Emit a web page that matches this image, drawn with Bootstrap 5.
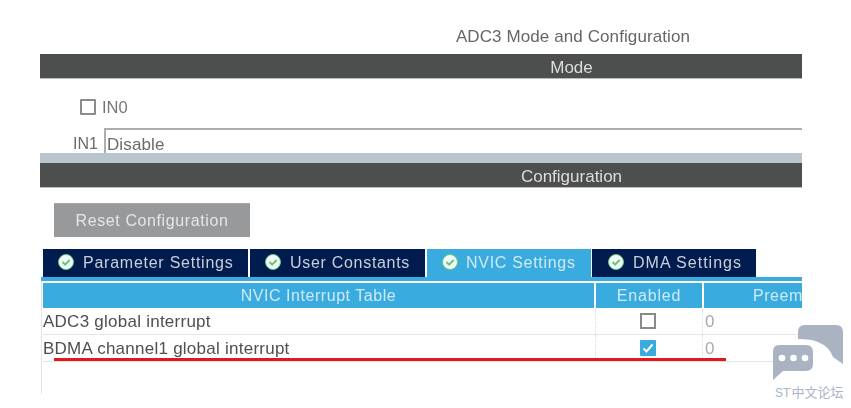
<!DOCTYPE html>
<html lang="en">
<head>
<meta charset="utf-8">
<title>ADC3 Mode and Configuration</title>
<link href="https://cdn.jsdelivr.net/npm/bootstrap@5.3.0/dist/css/bootstrap.min.css" rel="stylesheet">
<style>
html,body{margin:0;height:408px;overflow:hidden;background:#fff}
body{font-family:"Liberation Sans",Arial,sans-serif;color:#5a5a5a;font-size:16px;line-height:1.2}
.shot{width:762px;height:394px;margin-left:40px;overflow:hidden;filter:blur(.45px)}
.ttl{height:54px;padding-top:27px;padding-left:304px;text-align:center;letter-spacing:.1px;font-size:17px;line-height:20px;color:#666}
.sect{height:25px;background:#4d4f4f;color:#ddd;border-bottom:1px solid #bbb;text-align:center;padding-left:301px;font-size:17px;line-height:28px}
.in0{height:49px;padding:20px 0 0 40px;gap:6px;font-size:16.5px;line-height:17px;color:#777}
.box{display:block;width:16px;height:16px;border:2px solid #8b8b8b;border-radius:1px;background:#fff}
.in1{height:25px;padding-left:33px;gap:6px;color:#6a6a6a;line-height:32px}
.inp{flex:1;border:solid #aab0b0;border-width:2px 0 0 2px;padding-left:1px;font-size:17px;line-height:29px;letter-spacing:.15px}
.strip{height:10px;background:#b9c5cc}
.rbtn{width:196px;height:34px;margin:15px 0 12px 14px;background:#97999b;color:#e6e6e6;text-align:center;line-height:34px;letter-spacing:.6px;border-top:1px solid #aaa}
.tabs{margin-left:3px;height:28px;gap:2px}
.tb{background:#001c4e;color:#c9ced8;line-height:27px;letter-spacing:.75px;padding-left:15px;gap:8px}
.tb.on{background:#39abdf;color:#cfeaf7}
.w1{width:205px}.w2{width:175px;letter-spacing:.7px}.w3{width:164px;margin-right:-1px;padding-left:15px;gap:7px;letter-spacing:.7px}.w4{width:164px;padding-left:16px;letter-spacing:1px}
.ok{flex:none}
.bline{height:4px;background:#39abdf;margin-left:1px}
.grid{margin-left:1px;height:113px;border-left:1px solid #e3e6e8;padding-top:2px}
.hd{gap:2px;height:25px;margin-left:1px}
.hc{background:#39abdf;color:#cfeaf7;text-align:center;line-height:25px;letter-spacing:.55px;white-space:nowrap}
.c1{width:551px;flex:none}.c2{width:106px;flex:none;letter-spacing:.8px}.c3{width:98px;flex:none;text-align:left;padding-left:49px}
.rw{height:27px;border-bottom:1px solid #e3e6e8;margin-left:1px;line-height:28px;color:#4f4f4f}
.rw>div{flex:none}
.d1{width:552px;white-space:nowrap;font-size:17px;letter-spacing:.25px}
.d2{width:108px;padding-right:2px;border-left:1px dotted #d5dade;border-right:1px dotted #d5dade}
.d3{padding-left:2px;color:#aaa;font-size:17px}
.cb{width:16px;height:16px;border:2px solid #8a8a8a;background:#fff}
.cb.chk{background:#39abdf;border:0;border-radius:1px}
.red{position:absolute;left:54px;top:358px;width:672px;height:3px;background:#e3171e}
.mark1{position:absolute;left:772px;top:324px}
.mark2{position:absolute;left:775px;top:385px;font-size:12px;line-height:15px;color:#a9b4c4;white-space:nowrap;word-spacing:-2px;font-family:"Liberation Sans","Noto Sans CJK SC",sans-serif}
.mark2 span{font-size:13px}
</style>
</head>
<body>
<div class="shot">
  <div class="ttl">ADC3 Mode and Configuration</div>
  <div class="sect">Mode</div>
  <div class="in0 d-flex"><span class="box"></span><span>IN0</span></div>
  <div class="in1 d-flex"><span>IN1</span><div class="inp">Disable</div></div>
  <div class="strip"></div>
  <div class="sect">Configuration</div>
  <div class="rbtn">Reset Configuration</div>
  <div class="tabs d-flex">
    <div class="tb w1 d-flex"><svg class="ok" width="17" height="27" viewBox="0 0 17 27"><circle cx="8" cy="13" r="7.500" fill="#f2faf4" stroke="#63c985"/><path d="M4.500 13l2.600 2.600 4.600-4.600" fill="none" stroke="#66c487" stroke-width="2"/></svg><span>Parameter Settings</span></div>
    <div class="tb w2 d-flex"><svg class="ok" width="17" height="27" viewBox="0 0 17 27"><circle cx="8" cy="13" r="7.500" fill="#f2faf4" stroke="#63c985"/><path d="M4.500 13l2.600 2.600 4.600-4.600" fill="none" stroke="#66c487" stroke-width="2"/></svg><span>User Constants</span></div>
    <div class="tb on w3 d-flex"><svg class="ok" width="17" height="27" viewBox="0 0 17 27"><circle cx="8" cy="13" r="7.500" fill="#f2faf4" stroke="#63c985"/><path d="M4.500 13l2.600 2.600 4.600-4.600" fill="none" stroke="#66c487" stroke-width="2"/></svg><span>NVIC Settings</span></div>
    <div class="tb w4 d-flex"><svg class="ok" width="17" height="27" viewBox="0 0 17 27"><circle cx="8" cy="13" r="7.500" fill="#f2faf4" stroke="#63c985"/><path d="M4.500 13l2.600 2.600 4.600-4.600" fill="none" stroke="#66c487" stroke-width="2"/></svg><span>DMA Settings</span></div>
  </div>
  <div class="bline"></div>
  <div class="grid">
    <div class="hd d-flex">
      <div class="hc c1">NVIC Interrupt Table</div>
      <div class="hc c2">Enabled</div>
      <div class="hc c3">Preem</div>
    </div>
    <div class="rw d-flex">
      <div class="d1">ADC3 global interrupt</div>
      <div class="d2 d-flex justify-content-center align-items-center"><span class="cb d-block"></span></div>
      <div class="d3">0</div>
    </div>
    <div class="rw d-flex">
      <div class="d1">BDMA channel1 global interrupt</div>
      <div class="d2 d-flex justify-content-center align-items-center"><svg class="cb chk d-block" viewBox="0 0 16 16"><path d="M3.500 8.500l3 3 6-7" fill="none" stroke="#fff" stroke-width="2"/></svg></div>
      <div class="d3">0</div>
    </div>
  </div>
</div>
<div class="red"></div>
<svg class="mark1" width="72" height="58" viewBox="0 0 72 58">
  <path d="M33 1H64Q71 1 71 8V40L61 33Q58 23 46 18Q40 15 26 15V8Q26 1 33 1Z" fill="#a9b3c2"/>
  <path d="M7 21H34Q41 21 41 28V40Q41 47 34 47H11L1 56V28Q1 21 7 21Z" fill="#a9b3c2"/>
  <circle cx="10" cy="34" r="3.300" fill="#fff"/><circle cx="21.500" cy="34" r="3.300" fill="#fff"/><circle cx="33" cy="34" r="3.300" fill="#fff"/>
</svg>
<div class="mark2">ST <span>中文论坛</span></div>
<script src="https://cdn.jsdelivr.net/npm/bootstrap@5.3.0/dist/js/bootstrap.bundle.min.js"></script>
</body>
</html>
